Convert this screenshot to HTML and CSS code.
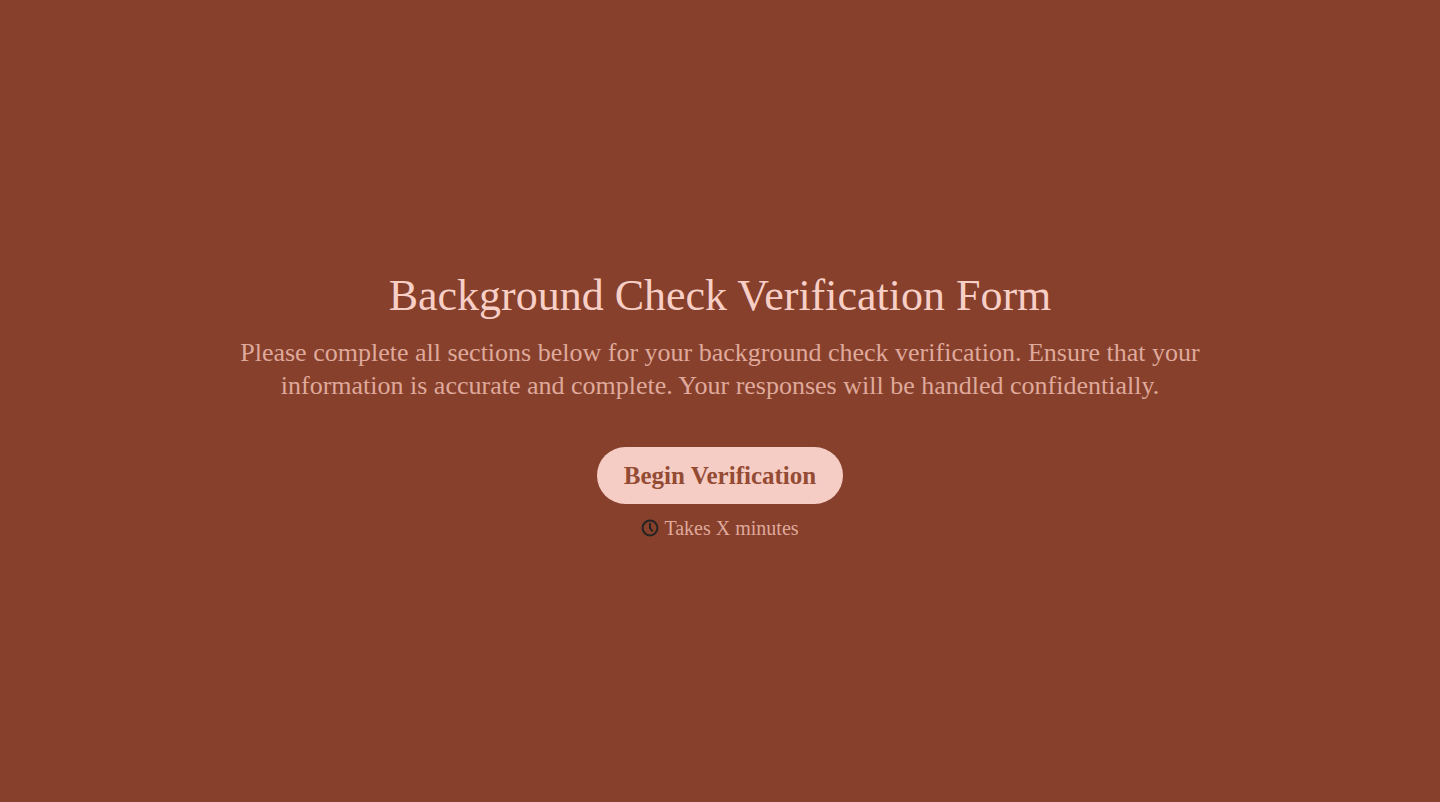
FILE: index.html
```html
<!DOCTYPE html>
<html lang="en">
<head>
    <meta charset="UTF-8">
    <meta name="viewport" content="width=device-width, initial-scale=1.0">
    <title>Background Check Verification Form</title>
    <link rel="stylesheet" href="styles.css">
</head>
<body>

    <main class="welcome">
        <h1>Background Check Verification Form</h1>
        <p class="description">Please complete all sections below for your background check verification. Ensure that your information is accurate and complete. Your responses will be handled confidentially.</p>
        <button type="button" class="begin-button">Begin Verification</button>
        <p class="duration">
            <svg class="clock" viewBox="0 0 18 18" aria-hidden="true">
                <circle cx="9" cy="9" r="7.4"/>
                <path d="M9 4.8V9.2l2.2 2.6"/>
            </svg>
            <span>Takes X minutes</span>
        </p>
    </main>

</body>
</html>
```

FILE: styles.css
```css
* {
    box-sizing: border-box;
}

body {
    margin: 0;
    background-color: #87402c;
    color: #dfa99b;
    font-family: "Liberation Serif", "Times New Roman", serif;
}

.welcome {
    display: flex;
    flex-direction: column;
    align-items: center;
    justify-content: center;
    min-height: 100vh;
    padding: 25px 20px 20px;
    text-align: center;
}

h1 {
    margin: 0;
    color: #f7cfc6;
    font-size: 44px;
    font-weight: 400;
    line-height: 56px;
}

.description {
    max-width: 1000px;
    margin: 12px 0 0;
    font-size: 26px;
    line-height: 33px;
}

.begin-button {
    margin-top: 45px;
    padding: 12px 27px;
    border: none;
    border-radius: 30px;
    background-color: #f5cdc5;
    color: #944b34;
    font-family: inherit;
    font-size: 25px;
    font-weight: 700;
    line-height: 33px;
    cursor: pointer;
}

.begin-button:hover {
    background-color: #fadcd5;
}

.duration {
    display: flex;
    align-items: center;
    gap: 5px;
    margin: 12px 0 0;
    font-size: 20px;
    line-height: 24px;
}

.clock {
    width: 18px;
    height: 18px;
    fill: none;
    stroke: #262322;
    stroke-width: 2;
    stroke-linecap: round;
    stroke-linejoin: round;
}
```
